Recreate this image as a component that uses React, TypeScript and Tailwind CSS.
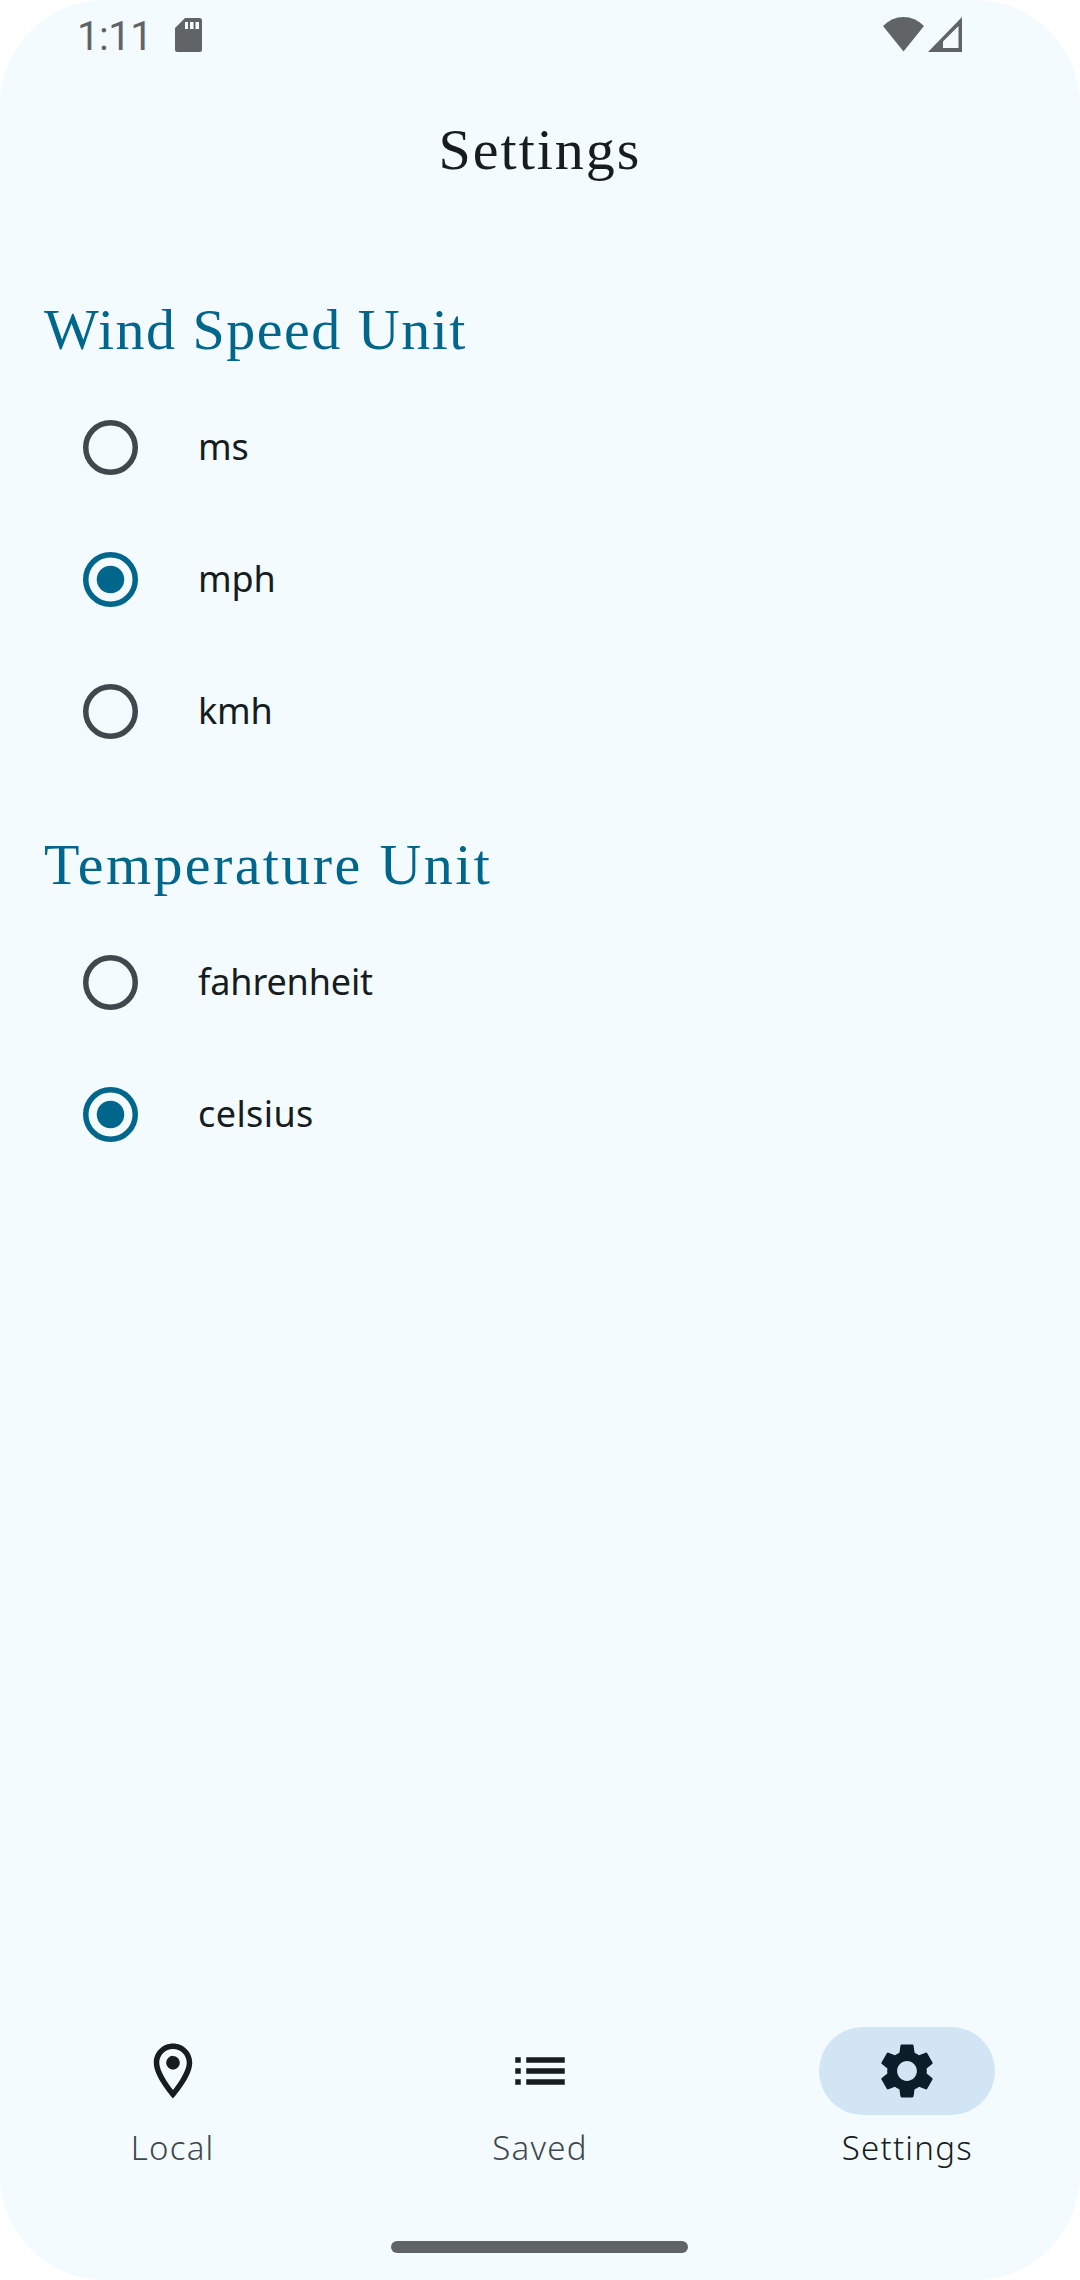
import type { ReactNode } from 'react';

function StatusBar() {
  return (
    <header className="flex h-[68px] items-start justify-between pl-[77px] pr-[118px] pt-[17px] text-[#606467]">
      <div className="flex">
        <span className="w-[98px] font-['Roboto',sans-serif] text-[40px] leading-[39px] tracking-[-0.5px]">1:11</span>
        <svg width="27" height="35" viewBox="0 0 27 35" className="mt-px" fill="currentColor">
          <path fillRule="evenodd" d="M10 0H24.5A2.5 2.5 0 0 1 27 2.5V31.5A2.5 2.5 0 0 1 24.5 34H2.5A2.5 2.5 0 0 1 0 31.5V10ZM10 4V11H13V4ZM15 4V11H18.5V4ZM20.500 4V11H24V4Z" />
        </svg>
      </div>
      <div className="flex gap-[4px]">
        <svg width="41" height="35" viewBox="0 0 41 35" fill="currentColor">
          <path d="M20.500 34.500L0 9Q9 0 20.500 0T41 9Z" />
        </svg>
        <svg width="34" height="35" viewBox="0 0 34 35" fill="currentColor">
          <path fillRule="evenodd" d="M0 35L34 0V35ZM15 24.500V31H30.500V9Z" />
        </svg>
      </div>
    </header>
  );
}

function Option({ label, selected = false, className = 'tracking-[-0.15px]' }: { label: string; selected?: boolean; className?: string }) {
  return (
    <div className="flex h-[132px] items-center pl-[83px]">
      <svg width="55" height="55" viewBox="0 0 20 20" className={selected ? 'text-[#00668b]' : 'text-[#41484d]'}>
        <circle cx="10" cy="10" r="9" fill="none" stroke="currentColor" strokeWidth="2" />
        {selected && <circle cx="10" cy="10" r="5" fill="currentColor" />}
      </svg>
      <span className={`ml-[60px] font-['Noto_Sans',sans-serif] text-[36px] leading-[50px] text-[#161c20] ${className}`}>
        {label}
      </span>
    </div>
  );
}

function Heading({ children, className }: { children: ReactNode; className: string }) {
  return (
    <h2 className={`pl-[44px] font-['Liberation_Serif',serif] text-[58px] leading-[80px] text-[#00668b] ${className}`}>
      {children}
    </h2>
  );
}

function NavItem({
  label,
  path,
  active = false,
}: {
  label: string;
  path: string;
  active?: boolean;
}) {
  return (
    <a className="flex flex-1 flex-col items-center">
      <span className={`flex h-[88px] w-[176px] items-center justify-center rounded-full ${active ? 'bg-[#d2e5f5] text-[#0b1d29]' : 'text-[#161c20]'}`}>
        <svg width="66" height="66" viewBox="0 0 24 24" fill="currentColor">
          <path d={path} />
        </svg>
      </span>
      <span className={`mt-[9px] font-['Noto_Sans',sans-serif] text-[33px] font-light leading-[48px] tracking-[1.25px] ${active ? 'text-[#161c20]' : 'text-[#41484d]'}`}>
        {label}
      </span>
    </a>
  );
}

const PIN =
  'M12 2C8.130 2 5 5.130 5 9c0 5.250 7 13 7 13s7-7.750 7-13c0-3.870-3.130-7-7-7zM7 9c0-2.760 2.240-5 5-5s5 2.240 5 5c0 2.880-2.880 7.190-5 9.880C9.920 16.210 7 11.850 7 9zM12 6.500a2.500 2.500 0 1 0 0 5 2.500 2.500 0 0 0 0-5z';
const LIST = 'M3 13h2v-2H3v2zm0 4h2v-2H3v2zm0-8h2V7H3v2zm4 4h14v-2H7v2zm0 4h14v-2H7v2zM7 7v2h14V7H7z';
const GEAR =
  'M19.140 12.940c.04-.3.06-.61.06-.94 0-.32-.02-.64-.07-.94l2.030-1.580c.18-.14.23-.41.12-.61l-1.920-3.320c-.12-.22-.37-.29-.59-.22l-2.390.96c-.5-.38-1.030-.7-1.620-.94l-.36-2.540c-.04-.24-.24-.41-.48-.41h-3.840c-.24 0-.43.17-.47.41l-.36 2.540c-.59.24-1.130.57-1.620.94l-2.390-.96c-.22-.08-.47 0-.59.22L2.740 8.870c-.12.21-.08.47.12.61l2.030 1.580c-.05.3-.09.63-.09.94s.02.64.07.94l-2.030 1.580c-.18.14-.23.41-.12.61l1.920 3.320c.12.22.37.29.59.22l2.390-.96c.5.38 1.030.7 1.620.94l.36 2.540c.05.24.24.41.48.41h3.840c.24 0 .44-.17.47-.41l.36-2.540c.59-.24 1.130-.56 1.620-.94l2.390.96c.22.08.47 0 .59-.22l1.920-3.320c.12-.22.07-.47-.12-.61l-2.010-1.580zM12 15.600c-1.980 0-3.600-1.620-3.600-3.600s1.620-3.600 3.600-3.600 3.600 1.620 3.600 3.600-1.620 3.600-3.600 3.600z';

export default function App() {
  return (
    <div className="h-[2280px] w-[1080px] bg-white">
      <div className="flex h-full flex-col overflow-hidden rounded-[105px] bg-[#f3fbff]">
        <StatusBar />
        <h1 className="mt-[42px] text-center font-['Liberation_Serif',serif] text-[58px] leading-[80px] tracking-[2px] text-[#161c20]">
          Settings
        </h1>
        <main className="flex-1">
          <Heading className="mt-[100px] tracking-[1.5px]">Wind Speed Unit</Heading>
          <div className="mt-[11px]">
            <Option label="ms" />
            <Option label="mph" selected />
            <Option label="kmh" />
          </div>
          <Heading className="mt-[48px] tracking-[2.4px]">Temperature Unit</Heading>
          <div className="mt-[11px]">
            <Option label="fahrenheit" />
            <Option label="celsius" selected className="tracking-[0.4px]" />
          </div>
        </main>
        <nav className="flex h-[214px] gap-[24px] px-px">
          <NavItem label="Local" path={PIN} />
          <NavItem label="Saved" path={LIST} />
          <NavItem label="Settings" path={GEAR} active />
        </nav>
        <div className="mb-[27px] ml-[391px] h-[12px] w-[297px] rounded-full bg-[#606467]" />
      </div>
    </div>
  );
}
